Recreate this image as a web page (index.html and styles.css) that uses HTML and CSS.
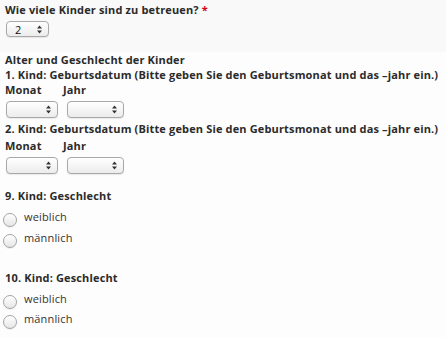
FILE: index.html
```html
<!DOCTYPE html>
<html lang="de">
<head>
<meta charset="utf-8">
<title>Kinder</title>
<link rel="stylesheet" href="styles.css">
</head>
<body>
<div class="top">
  <div class="q">Wie viele Kinder sind zu betreuen? <span class="req">*</span></div>
  <select class="sel sel-count"><option>2</option></select>
</div>
<div class="main">
  <div class="q">Alter und Geschlecht der Kinder</div>
  <div class="q">1. Kind: Geburtsdatum (Bitte geben Sie den Geburtsmonat und das –jahr ein.)</div>
  <div class="dates">
    <div class="field"><span class="q">Monat</span><select class="sel sel-month"><option></option></select></div>
    <div class="field field-year"><span class="q">Jahr</span><select class="sel sel-year"><option></option></select></div>
  </div>
  <div class="q gap-q">2. Kind: Geburtsdatum (Bitte geben Sie den Geburtsmonat und das –jahr ein.)</div>
  <div class="dates dates-2">
    <div class="field"><span class="q">Monat</span><select class="sel sel-month"><option></option></select></div>
    <div class="field field-year"><span class="q">Jahr</span><select class="sel sel-year"><option></option></select></div>
  </div>

  <div class="q gender-q first-gender">9. Kind: Geschlecht</div>
  <label class="radio first-radio"><input type="radio" name="g9"><span>weiblich</span></label>
  <label class="radio"><input type="radio" name="g9"><span>männlich</span></label>

  <div class="q gender-q second-gender">10. Kind: Geschlecht</div>
  <label class="radio first-radio"><input type="radio" name="g10"><span>weiblich</span></label>
  <label class="radio second-radio"><input type="radio" name="g10"><span>männlich</span></label>
</div>
</body>
</html>
```
FILE: styles.css
```css
html, body {
  margin: 0;
  padding: 0;
}
body {
  background: #fdfdfd;
  font-family: "Open Sans", "DejaVu Sans", sans-serif;
  font-size: 11px;
  line-height: 15px;
  letter-spacing: 0.15px;
  color: #333;
  width: 446px;
  height: 337px;
  overflow: hidden;
}
.top {
  background: #f9f9f9;
  padding: 2px 5px 0;
  height: 50px;
}
.main {
  padding: 0 5px;
}
.q {
  font-weight: 700;
  color: #2b2b2b;
  white-space: nowrap;
}
.req {
  color: #d0021b;
}
.sel {
  -webkit-appearance: none;
  appearance: none;
  display: block;
  box-sizing: border-box;
  height: 17px;
  margin: 0;
  padding: 0 0 0 8px;
  border: 1px solid #a9a9a9;
  border-radius: 4px;
  font-family: "Open Sans", "DejaVu Sans", sans-serif;
  font-size: 11px;
  line-height: 15px;
  color: #111;
  background-color: #f6f6f6;
  background-image:
    url("data:image/svg+xml,%3Csvg xmlns='http://www.w3.org/2000/svg' width='5' height='9'%3E%3Cpath d='M2.5 0.5L5 3.5H0z M2.5 8.5L5 5.5H0z' fill='%23333'/%3E%3C/svg%3E"),
    linear-gradient(#ffffff, #ececec);
  background-repeat: no-repeat, no-repeat;
  background-position: right 6px center, 0 0;
  box-shadow: 0 1px 1px rgba(0,0,0,0.08);
}
.sel-count {
  width: 43px;
  margin: 4px 0 0 1px;
  height: 16px;
}
.dates {
  display: flex;
  margin-top: 0;
}
.field {
  display: flex;
  flex-direction: column;
  width: 58px;
}
.field-year {
  width: auto;
}
.field .sel {
  margin-top: 4px;
}
.sel-month {
  width: 52px;
  margin-left: 1px;
}
.sel-year {
  width: 57px;
  margin-left: 4px;
}
.gap-q {
  margin-top: 3px;
}
.dates-2 .q {
  margin-top: 2px;
}
.first-gender {
  margin-top: 14px;
}
.second-gender {
  margin-top: 25px;
}
.radio {
  display: flex;
  align-items: flex-start;
  height: 15px;
  margin-top: 6px;
  margin-left: -2px;
  color: #333;
}
.first-radio {
  margin-top: 6px;
}
.second-radio {
  margin-top: 5px;
}
.radio input {
  -webkit-appearance: none;
  appearance: none;
  flex: none;
  box-sizing: border-box;
  width: 14px;
  height: 14px;
  margin: 4px 7px 0 0;
  border: 1px solid #a3a3a3;
  border-radius: 50%;
  background: linear-gradient(#ffffff, #e6e6e6);
  box-shadow: inset 0 1px 1px rgba(255,255,255,0.9), 0 1px 1px rgba(0,0,0,0.06);
}
```
